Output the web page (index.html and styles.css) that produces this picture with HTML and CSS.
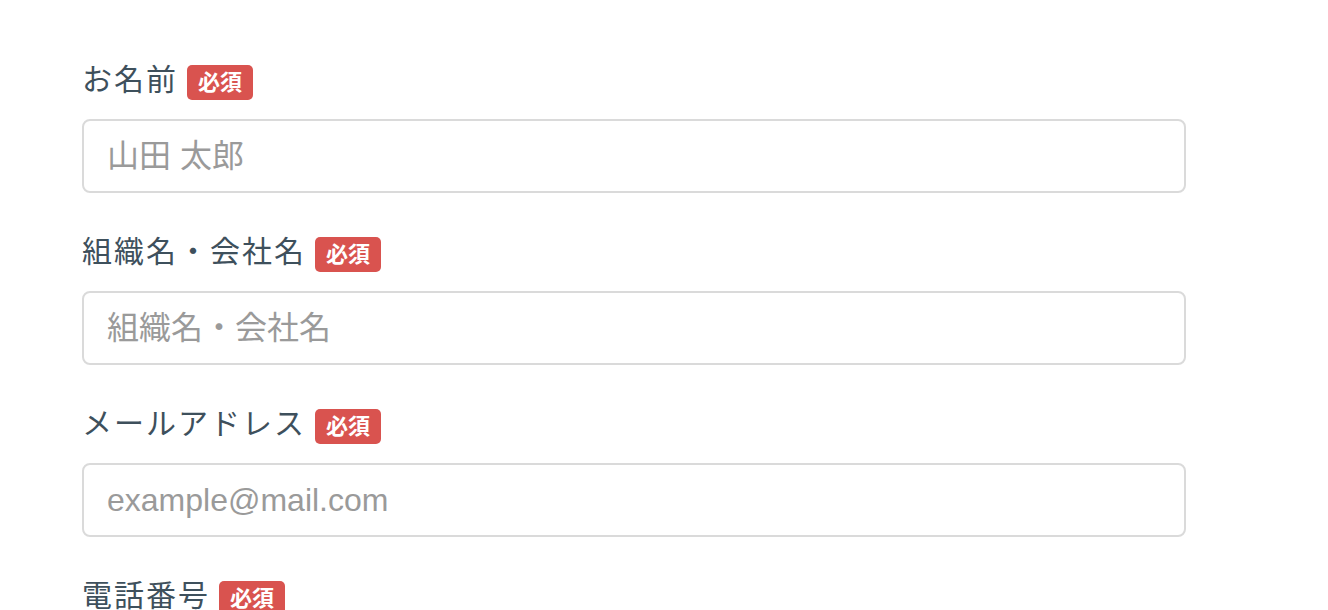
FILE: index.html
```html
<!DOCTYPE html>
<html lang="ja">
<head>
    <meta charset="UTF-8">
    <meta name="viewport" content="width=device-width, initial-scale=1.0">
    <title>お問い合わせ</title>
    <link rel="stylesheet" href="styles.css">
</head>
<body>
    <form class="contact-form">
        <div class="form-group">
            <label class="form-label" for="name"><span class="label-text">お名前</span><span class="required">必須</span></label>
            <input class="form-input" type="text" id="name" placeholder="山田 太郎">
        </div>
        <div class="form-group">
            <label class="form-label" for="company"><span class="label-text">組織名・会社名</span><span class="required">必須</span></label>
            <input class="form-input" type="text" id="company" placeholder="組織名・会社名">
        </div>
        <div class="form-group">
            <label class="form-label" for="email"><span class="label-text">メールアドレス</span><span class="required">必須</span></label>
            <input class="form-input" type="email" id="email" placeholder="example@mail.com">
        </div>
        <div class="form-group">
            <label class="form-label" for="tel"><span class="label-text">電話番号</span><span class="required">必須</span></label>
            <input class="form-input" type="tel" id="tel" placeholder="03-1234-5678">
        </div>
    </form>
</body>
</html>
```

FILE: styles.css
```css
body {
    margin: 0;
    padding: 0;
    background-color: #fff;
    font-family: "Liberation Sans", "Noto Sans CJK JP", sans-serif;
}

.contact-form {
    width: 1104px;
    padding: 64px 0 0 82px;
}

.form-group {
    margin-bottom: 43px;
}

.form-label {
    display: flex;
    align-items: center;
    height: 36px;
    margin-bottom: 19px;
}

.label-text {
    margin-top: -5px;
    font-size: 30px;
    line-height: 36px;
    letter-spacing: 2px;
    color: #3e505c;
}

.required {
    display: inline-block;
    height: 35px;
    margin-left: 9px;
    padding: 0 11px;
    font-size: 22px;
    line-height: 35px;
    font-weight: bold;
    color: #fff;
    background-color: #d9534f;
    border-radius: 5px;
}

.form-input {
    display: block;
    box-sizing: border-box;
    width: 100%;
    height: 74px;
    padding: 0 23px;
    font-family: inherit;
    font-size: 32px;
    color: #333;
    border: 2px solid #dadada;
    border-radius: 8px;
    outline: none;
}

.form-input::placeholder {
    color: #9a9a9a;
}
```
